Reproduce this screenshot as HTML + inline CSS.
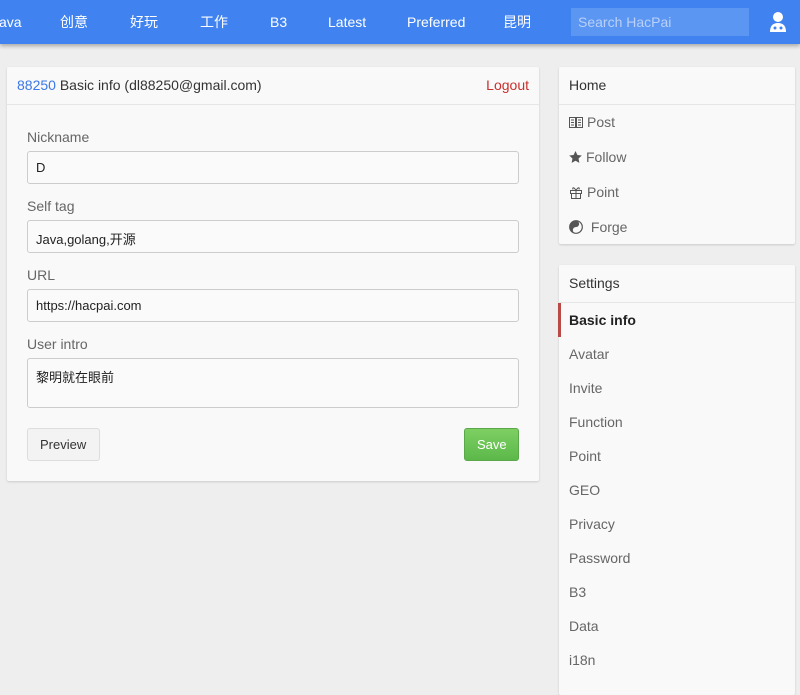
<!DOCTYPE html>
<html><head><meta charset="utf-8"><style>
*{box-sizing:border-box;margin:0;padding:0}
body{width:800px;height:678px;overflow:hidden;background:#eeeeee;font-family:"Liberation Sans","Noto Sans CJK SC",sans-serif;font-size:14px;color:#333;position:relative}
.nav{position:absolute;left:0;top:0;width:800px;height:44px;background:#3f82f0;box-shadow:0 2px 4px rgba(0,0,0,.3)}
.nav span{position:absolute;top:13px;line-height:18px;height:18px;color:#fff;font-size:14px;white-space:nowrap}
.search{position:absolute;left:571px;top:8px;width:178px;height:28px;background:#5b96f3;color:#b9d0f8;font-size:14px;padding:6px 7px}
.card{position:absolute;background:#f9f9f9;box-shadow:0 1px 2px rgba(0,0,0,.15);border-radius:2px}
.hd{height:38px;border-bottom:1px solid #e6e6e6;padding:10px 10px;font-size:14px}
.lbl{position:absolute;left:20px;color:#666;font-size:14px}
.inp{position:absolute;left:20px;width:492px;height:33px;border:1px solid #ccc;border-radius:3px;background:#fafafa;padding:8px 8px;font-size:13px;color:#222}
.item{position:absolute;left:10px;color:#666;font-size:14px;display:flex;align-items:center;gap:4px;line-height:18px}
.item svg{display:block}
</style></head><body>
<div class="nav">
<span style="left:-1px">ava</span><span style="left:60px">创意</span><span style="left:130px">好玩</span><span style="left:200px">工作</span><span style="left:270px">B3</span><span style="left:328px">Latest</span><span style="left:407px">Preferred</span><span style="left:503px">昆明</span>
<div class="search">Search HacPai</div>
<svg style="position:absolute;left:769px;top:11px" width="18" height="22" viewBox="0 0 18 22"><circle cx="9" cy="6" r="5" fill="#fff"/><path d="M1 21 Q1 12 9 12 Q17 12 17 21Z" fill="#fff"/><circle cx="6" cy="17" r="1.5" fill="#3f82f0"/><circle cx="12" cy="17" r="1.5" fill="#3f82f0"/></svg>
</div>
<div class="card" style="left:7px;top:67px;width:532px;height:414px">
<div class="hd"><span style="color:#3b78e7">88250</span> Basic info (dl88250@gmail.com)<span style="float:right;color:#c9302c">Logout</span></div>
<div class="lbl" style="top:62px">Nickname</div><div class="inp" style="top:84px">D</div>
<div class="lbl" style="top:131px">Self tag</div><div class="inp" style="top:153px">Java,golang,开源</div>
<div class="lbl" style="top:200px">URL</div><div class="inp" style="top:222px">https://hacpai.com</div>
<div class="lbl" style="top:269px">User intro</div><div class="inp" style="top:291px;height:50px">黎明就在眼前</div>
<div style="position:absolute;left:20px;top:361px;width:73px;height:33px;border:1px solid #ddd;border-radius:3px;background:#f3f3f3;padding:8px 12px;font-size:13px;color:#333">Preview</div>
<div style="position:absolute;left:457px;top:361px;width:55px;height:33px;border:1px solid #5aa84a;border-radius:3px;background:linear-gradient(#7ecf62,#5cb84a);padding:8px 12px;font-size:13px;color:#fff">Save</div>
</div>
<div class="card" style="left:559px;top:67px;width:236px;height:177px">
<div class="hd">Home</div>
<div class="item" style="top:46px"><svg width="14" height="11" viewBox="0 0 14 11" fill="none" stroke="#555" stroke-width="1"><rect x=".5" y=".5" width="6" height="10"/><rect x="7.5" y=".5" width="6" height="10"/><path d="M2 3h3M2 5.5h3M2 8h3M9 3h3M9 5.5h3M9 8h3"/></svg>Post</div>
<div class="item" style="top:81px"><svg width="13" height="12" viewBox="0 0 24 23"><path d="M12 0l3.6 7.6 8.4 1-6.2 5.8 1.6 8.3L12 18.6 4.6 22.7l1.6-8.3L0 8.6l8.4-1z" fill="#555"/></svg>Follow</div>
<div class="item" style="top:116px"><svg width="14" height="13" viewBox="0 0 14 13" fill="none" stroke="#555" stroke-width="1"><rect x="1.5" y="4.5" width="11" height="3"/><rect x="2.5" y="7.5" width="9" height="5"/><path d="M7 4.5v8M7 4.5C5 1 3 1 4 3.5M7 4.5C9 1 11 1 10 3.5"/></svg>Point</div>
<div class="item" style="top:151px"><svg width="14" height="14" viewBox="0 0 14 14"><circle cx="7" cy="7" r="6.3" fill="none" stroke="#555" stroke-width="1.2"/><path d="M7 .7A6.3 6.3 0 0 0 7 13.3 3.15 3.15 0 0 1 7 7 3.15 3.15 0 0 0 7 .7z" fill="#555"/></svg>&nbsp;Forge</div>
</div>
<div class="card" style="left:559px;top:265px;width:236px;height:430px">
<div class="hd">Settings</div>
<div style="position:absolute;left:-1px;top:38px;width:3px;height:34px;background:#b94a48"></div>
<div class="item" style="top:46px;color:#222;font-weight:bold">Basic info</div>
<div class="item" style="top:80px">Avatar</div>
<div class="item" style="top:114px">Invite</div>
<div class="item" style="top:148px">Function</div>
<div class="item" style="top:182px">Point</div>
<div class="item" style="top:216px">GEO</div>
<div class="item" style="top:250px">Privacy</div>
<div class="item" style="top:284px">Password</div>
<div class="item" style="top:318px">B3</div>
<div class="item" style="top:352px">Data</div>
<div class="item" style="top:386px">i18n</div>
</div>
</body></html>
